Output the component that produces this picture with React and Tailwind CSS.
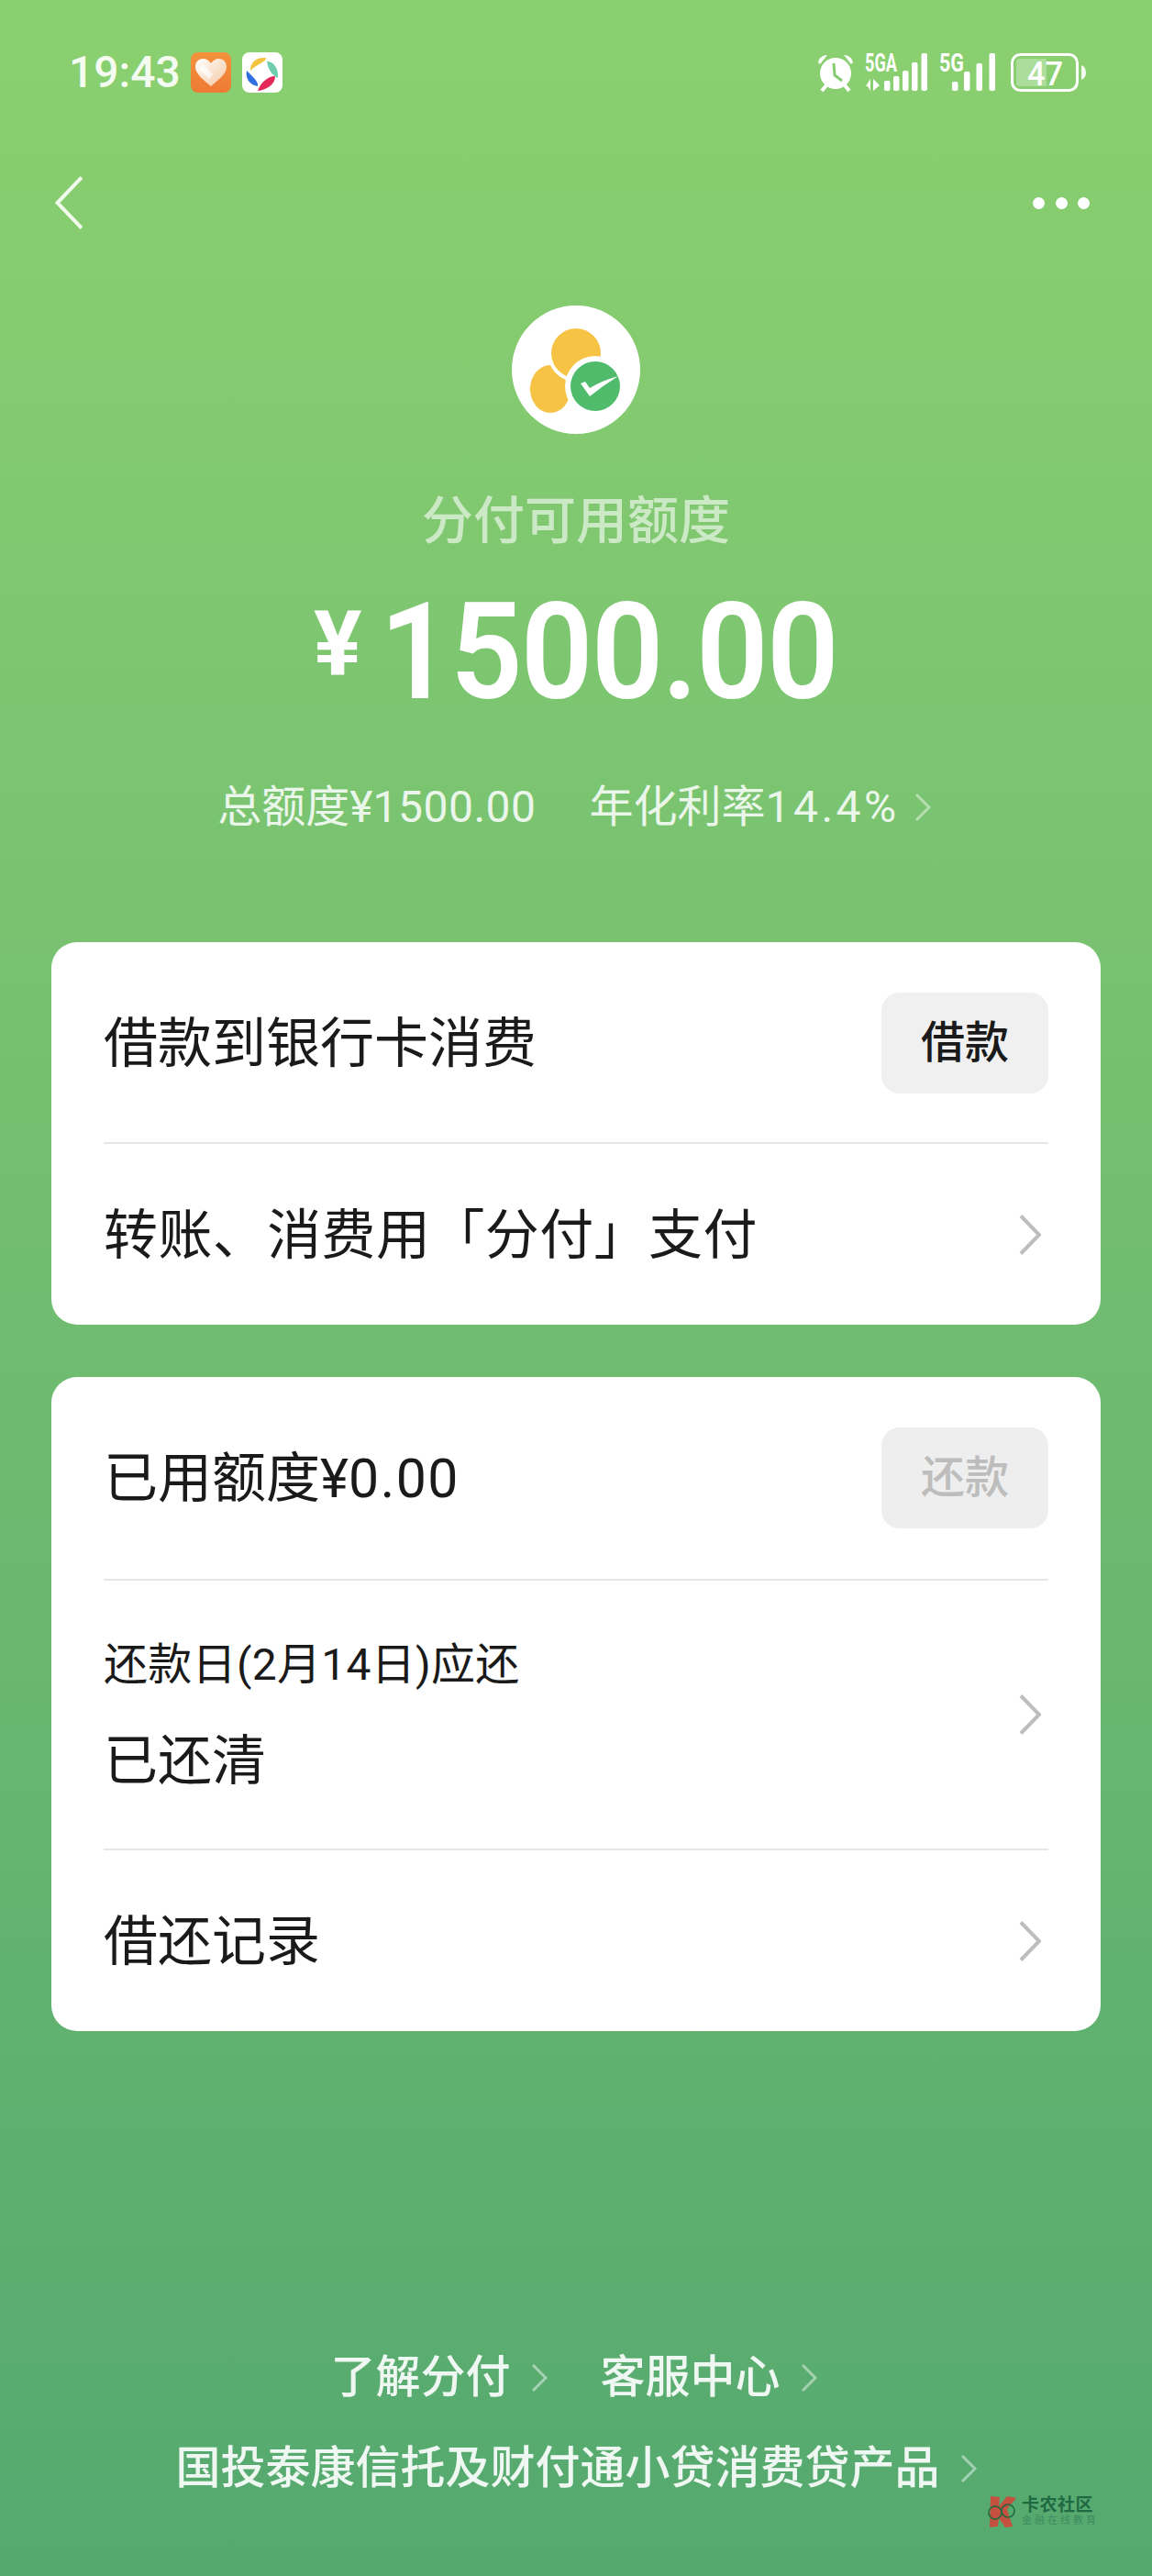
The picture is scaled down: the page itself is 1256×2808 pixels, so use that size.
import React from 'react';

const Chevron = ({ className = 'w-[24px] h-[44px]', color = '#bdbdbd', sw = 4 }) => (
    <svg viewBox="0 0 24 44" className={className} fill="none">
        <path d="M2 1.5 L22 22 L2 42.5" stroke={color} strokeWidth={sw} />
    </svg>
);

const SmallChevron = ({ className = '' }) => (
    <svg viewBox="0 0 18 30" className={`w-[18px] h-[30px] ${className}`} fill="none">
        <path d="M2 1 L16 15 L2 29" stroke="#ffffff" strokeOpacity="0.45" strokeWidth="3" />
    </svg>
);

const HeartIcon = () => (
    <svg viewBox="0 0 44 44" className="w-[44px] h-[44px]">
        <defs>
            <linearGradient id="orange" x1="0" y1="0" x2="0" y2="1">
                <stop offset="0" stopColor="#f4923c" />
                <stop offset="1" stopColor="#ee7a35" />
            </linearGradient>
            <linearGradient id="heart" x1="0" y1="0" x2="1" y2="1">
                <stop offset="0" stopColor="#ffffff" />
                <stop offset="1" stopColor="#f3c7a0" />
            </linearGradient>
        </defs>
        <rect width="44" height="44" rx="8" fill="url(#orange)" />
        <path d="M22 37 C15 31 5 24 5 16 C5 10 9 7 14 7 C17 7 20 9 22 12 C24 9 27 7 30 7 C35 7 39 10 39 16 C39 24 29 31 22 37 Z" fill="url(#heart)" />
        <path d="M13 13 L24 24 L20 29 L9 19 Z" fill="#ffffff" opacity="0.7" />
    </svg>
);

const PetalIcon = () => (
    <svg viewBox="0 0 44 44" className="w-[44px] h-[44px]">
        <rect width="44" height="44" rx="8" fill="#ffffff" />
        <path d="M9 20 C9 11 15 5 26 6 C26 11 17 12 9 20 Z" fill="#f2c33f" />
        <path d="M27 10 C34 10 40 17 39 28 C33 26 28 18 27 10 Z" fill="#6fcdb0" />
        <path d="M5 20 C3 29 9 36 17 37 C18 32 12 27 5 20 Z" fill="#2f6fe0" />
        <path d="M17 42 C27 41 36 35 36 26 C28 26 20 33 17 42 Z" fill="#e5285a" />
    </svg>
);

const AlarmIcon = () => (
    <svg viewBox="0 0 40 42" className="w-[40px] h-[42px]">
        <circle cx="20" cy="22" r="17" fill="#ffffff" />
        <path d="M1 10 C2 5 6 2 11 2 L3 12 Z M39 10 C38 5 34 2 29 2 L37 12 Z" fill="#ffffff" />
        <path d="M5 41 L10 35 M35 41 L30 35" stroke="#ffffff" strokeWidth="4" />
        <path d="M18 11 L19 24 L27 30" stroke="#84cc6f" strokeWidth="3" fill="none" />
    </svg>
);

const NetworkA = () => (
    <svg viewBox="0 0 68 42" className="w-[68px] h-[42px] overflow-visible" fill="#ffffff">
        <text x="0" y="20" fontFamily="Roboto" fontWeight="700" fontSize="27" textLength="35" lengthAdjust="spacingAndGlyphs">5GA</text>
        <path d="M6 28 L6 41 L3 36 L1 36 Z M9 28 L9 41 L16 35 Z" />
        <rect x="21" y="30" width="6.5" height="11" rx="2" />
        <rect x="31" y="25" width="6.5" height="16" rx="2" />
        <rect x="41" y="19" width="6.5" height="22" rx="2" />
        <rect x="51" y="10" width="6.5" height="31" rx="2" />
        <rect x="61.5" y="0" width="6.5" height="41" rx="2" />
    </svg>
);

const NetworkB = () => (
    <svg viewBox="0 0 61 42" className="w-[61px] h-[42px] overflow-visible" fill="#ffffff">
        <text x="0" y="20" fontFamily="Roboto" fontWeight="700" fontSize="27" textLength="27" lengthAdjust="spacingAndGlyphs">5G</text>
        <rect x="14" y="31" width="6.5" height="10" rx="2" />
        <rect x="27" y="20" width="6.5" height="21" rx="2" />
        <rect x="40.5" y="11" width="6.5" height="30" rx="2" />
        <rect x="54.5" y="0" width="6.5" height="41" rx="2" />
    </svg>
);

const Battery = () => (
    <svg viewBox="0 0 82 42" className="w-[82px] h-[42px] overflow-visible">
        <rect x="1.5" y="1.5" width="71" height="39" rx="9" fill="none" stroke="#ffffff" strokeWidth="3" />
        <path d="M6 10 Q6 6 10 6 L39 6 L39 36 L10 36 Q6 36 6 32 Z" fill="#ffffff" opacity="0.3" />
        <path d="M77 13 Q82 15 82 21 Q82 27 77 29 Z" fill="#ffffff" opacity="0.9" />
        <text x="18" y="35" fontFamily="Roboto" fontWeight="500" fontSize="37" textLength="39" lengthAdjust="spacingAndGlyphs" fill="#ffffff">47</text>
    </svg>
);

const Logo = () => (
    <svg viewBox="0 0 140 140" className="w-[140px] h-[140px]">
        <circle cx="70" cy="70" r="70" fill="#ffffff" />
        <ellipse cx="42" cy="91" rx="22" ry="26" fill="#f6c344" />
        <circle cx="70" cy="52" r="31" fill="#ffffff" />
        <circle cx="70" cy="52" r="27" fill="#f6c344" />
        <circle cx="91" cy="88" r="33" fill="#ffffff" />
        <circle cx="91" cy="88" r="27" fill="#4fbb6b" />
        <path d="M75 85 L80 83 L85 90 Q98 82 116 77 Q100 87 85 99 Z" fill="#ffffff" />
    </svg>
);

const Watermark = () => (
    <div className="absolute left-[1074px] top-[2720px] flex items-center gap-[4px]">
        <svg viewBox="0 0 36 36" className="w-[36px] h-[36px]">
            <path d="M6 1 L16 2 L15 12 L24 1 L34 3 L24 15 L28 28 L30 34 L22 35 L15 25 L14 34 L5 35 Z" fill="#c4503f" />
            <circle cx="11" cy="19" r="7" fill="none" stroke="#1f6a3f" strokeWidth="1.6" />
            <circle cx="25" cy="17" r="7" fill="none" stroke="#1f6a3f" strokeWidth="1.6" />
        </svg>
        <div className="flex flex-col">
            <span className="text-[19px] leading-[20px] font-bold tracking-[0.5px] text-[#1f6a42]">卡农社区</span>
            <span className="text-[11px] leading-[14px] tracking-[3px] text-[#3f8a5d]">金融在线教育</span>
        </div>
    </div>
);

export default function App() {
    return (
        <div className="relative w-full h-[2808px] overflow-hidden bg-linear-to-b from-[#8bd070] to-[#55a96f] font-['Roboto','Noto_Sans_CJK_SC',sans-serif] text-[#1a1a1a]">
            {/* status bar */}
            <div className="h-[158px] flex items-center justify-between pl-[75px] pr-[72px]">
                <div className="flex items-center">
                    <span className="w-[133px] text-[48px] leading-none font-medium text-[#f4fbf0]">19:43</span>
                    <HeartIcon />
                    <span className="w-[12px]" />
                    <PetalIcon />
                </div>
                <div className="flex items-center">
                    <AlarmIcon />
                    <span className="w-[12px]" />
                    <NetworkA />
                    <span className="w-[13px]" />
                    <NetworkB />
                    <span className="w-[17px]" />
                    <Battery />
                </div>
            </div>

            {/* nav */}
            <div className="h-[126px] flex items-center justify-between pl-[60px] pr-[68px]">
                <svg viewBox="0 0 30 58" className="w-[30px] h-[58px]" fill="none">
                    <path d="M29 1.5 L2.5 29 L29 56.5" stroke="#f1faec" strokeWidth="4" />
                </svg>
                <div className="flex gap-[11.5px]">
                    <span className="w-[13px] h-[13px] rounded-full bg-white" />
                    <span className="w-[13px] h-[13px] rounded-full bg-white" />
                    <span className="w-[13px] h-[13px] rounded-full bg-white" />
                </div>
            </div>

            {/* header */}
            <div className="mt-[49px] flex flex-col items-center">
                <Logo />
                <div className="mt-[65px] text-[56px] leading-[60px] font-medium text-white/60">分付可用额度</div>
                <div className="mt-[52px] h-[120px] w-full pl-[342px] flex items-center text-white font-semibold">
                    <span className="w-[72px] text-[98px] leading-none -mt-[14px] font-bold">¥</span>
                    <span className="text-[146px] leading-none tracking-[-2px] mt-[4px] origin-left scale-x-[0.945]">1500.00</span>
                </div>
                <div className="mt-[80px] pr-[4px] flex items-center text-[48px] leading-[60px] text-white/85">
                    <span>总额度¥<span className="tracking-[0.5px]">1500.00</span></span>
                    <span className="ml-[58px]">年化利率<span className="tracking-[3.5px]">14.4%</span></span>
                    <SmallChevron className="ml-[16px]" />
                </div>
            </div>

            {/* cards */}
            <div className="mt-[117px] mx-[56px] flex flex-col gap-[57px]">
                <div className="bg-white rounded-[28px] px-[57px]">
                    <div className="h-[220px] flex items-center justify-between border-b-2 border-[#e6e6e6]">
                        <span className="text-[59px] pt-[4px]">借款到银行卡消费</span>
                        <button className="w-[182px] h-[110px] mt-[2px] rounded-[20px] bg-[#f0f0f0] text-[48px] font-medium">借款</button>
                    </div>
                    <div className="h-[197px] flex items-center justify-between pr-[8px]">
                        <span className="text-[59px] pt-[4px] tracking-[0.4px]">转账、消费用「分付」支付</span>
                        <Chevron />
                    </div>
                </div>

                <div className="bg-white rounded-[28px] px-[57px]">
                    <div className="h-[222px] flex items-center justify-between border-b-2 border-[#e6e6e6]">
                        <span className="text-[59px] pt-[3px]">已用额度¥<span className="tracking-[1.5px]">0.00</span></span>
                        <button className="w-[182px] h-[110px] rounded-[20px] bg-[#eeeeee] text-[48px] font-medium text-[#bdbdbd]">还款</button>
                    </div>
                    <div className="h-[294px] flex items-center justify-between pr-[8px] border-b-2 border-[#e6e6e6]">
                        <div className="flex flex-col">
                            <span className="text-[48px] leading-[60px] tracking-[0.3px]">还款日(2月14日)应还</span>
                            <span className="mt-[42px] text-[59px] leading-[66px]">已还清</span>
                        </div>
                        <Chevron />
                    </div>
                    <div className="h-[197px] flex items-center justify-between pr-[8px]">
                        <span className="text-[59px] pt-[3px]">借还记录</span>
                        <Chevron />
                    </div>
                </div>
            </div>

            {/* footer links */}
            <div className="mt-[348px] flex flex-col items-center text-[49px] font-medium leading-[60px] text-white/90">
                <div className="flex items-center pr-[5px]">
                    <span>了解分付</span>
                    <SmallChevron className="ml-[22px]" />
                    <span className="ml-[58px]">客服中心</span>
                    <SmallChevron className="ml-[22px]" />
                </div>
                <div className="mt-[39px] flex items-center">
                    <span>国投泰康信托及财付通小贷消费贷产品</span>
                    <SmallChevron className="ml-[22px]" />
                </div>
            </div>

            <Watermark />
        </div>
    );
}
